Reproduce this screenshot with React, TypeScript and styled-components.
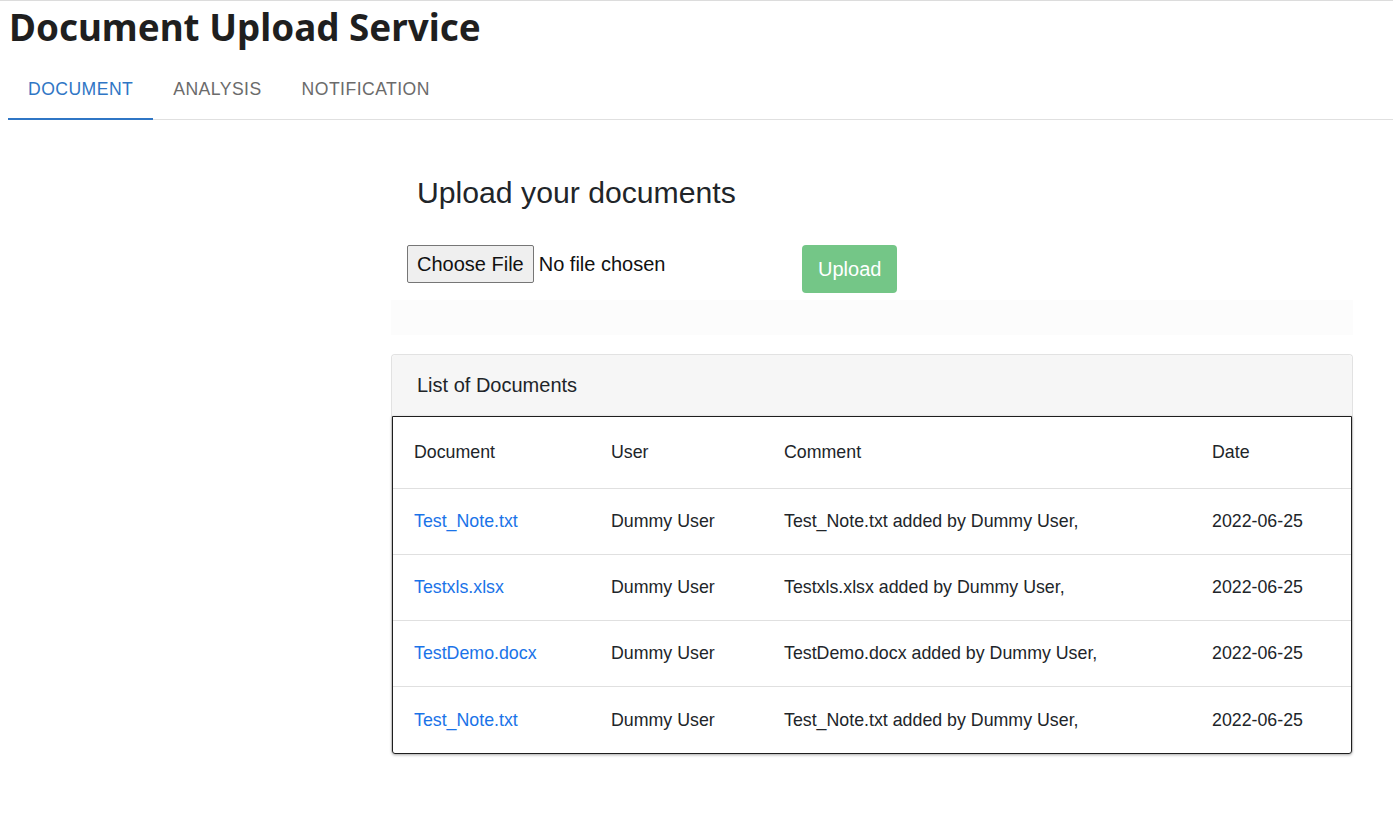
import React from "react";
import styled, { createGlobalStyle } from "styled-components";

const GlobalStyle = createGlobalStyle`
  html, body { margin: 0; padding: 0; background: #ffffff; }
  body {
    font-family: "Liberation Sans", Arial, sans-serif;
    color: #212529;
    border-top: 1px solid #dcdcdc;
  }
  * { box-sizing: border-box; }
`;

const Page = styled.div`
  width: 1393px;
  min-height: 813px;
`;

const Title = styled.h1`
  margin: 0;
  padding: 2px 0 0 9px;
  font-family: "Noto Sans", "Open Sans", sans-serif;
  font-weight: 700;
  font-size: 36.8px;
  line-height: 48px;
  color: #1f1f1f;
`;

const TabBar = styled.nav`
  margin: 9px 0 0 8px;
  display: flex;
  box-shadow: inset 0 -1px 0 #e0e0e0;
`;

const Tab = styled.div<{ $active?: boolean }>`
  height: 60px;
  padding: 0 20px;
  display: flex;
  align-items: center;
  font-size: 17.6px;
  letter-spacing: 0.45px;
  text-transform: uppercase;
  color: ${(p) => (p.$active ? "#2f76c5" : "#6b6b6b")};
  border-bottom: 2px solid ${(p) => (p.$active ? "#2f76c5" : "transparent")};
`;

const Content = styled.main`
  margin-left: 391px;
  width: 962px;
  padding-top: 56px;
`;

const SectionTitle = styled.h2`
  margin: 0;
  padding-left: 26px;
  font-weight: 400;
  font-size: 30.2px;
  line-height: 34px;
  color: #212529;
`;

const UploadRow = styled.div`
  display: flex;
  align-items: flex-start;
  margin-top: 35px;
  padding-left: 16px;
`;

const FileField = styled.div`
  width: 395px;
  display: flex;
  align-items: center;
  gap: 5px;
  font-size: 20px;
`;

const ChooseButton = styled.button`
  height: 38px;
  padding: 0 9px;
  font-family: "Liberation Sans", Arial, sans-serif;
  font-size: 20px;
  color: #111;
  background: #efefef;
  border: 1px solid #767676;
  border-radius: 2px;
`;

const FileStatus = styled.span`
  color: #111;
`;

const UploadButton = styled.button`
  height: 48px;
  padding: 0 16px;
  font-family: "Liberation Sans", Arial, sans-serif;
  font-size: 20px;
  color: #ffffff;
  background: #74c687;
  border: none;
  border-radius: 4px;
`;

const Band = styled.div`
  margin-top: 7px;
  height: 35px;
  background: #fcfcfc;
`;

const Card = styled.section`
  margin-top: 19px;
  border: 1px solid #e2e2e2;
  border-radius: 4px;
  border-bottom: none;
`;

const CardHeader = styled.div`
  height: 61px;
  padding-left: 25px;
  display: flex;
  align-items: center;
  background: #f6f6f6;
  font-size: 20px;
  color: #212529;
  border-radius: 4px 4px 0 0;
`;

const Table = styled.table`
  width: 960px;
  border-collapse: separate;
  border-spacing: 0;
  table-layout: fixed;
  border: 1px solid #1e1e1e;
  border-radius: 0 0 3px 3px;
  box-shadow: 0 1px 3px rgba(0, 0, 0, 0.35);
  font-size: 17.8px;
`;

const HeadCell = styled.th`
  height: 72px;
  padding: 0 0 0 21px;
  text-align: left;
  font-weight: 400;
  color: #212529;
  border-bottom: 1px solid #e0e0e0;
`;

const Cell = styled.td<{ $last?: boolean }>`
  height: 66px;
  padding: 0 0 0 21px;
  color: #212529;
  border-bottom: ${(p) => (p.$last ? "none" : "1px solid #e0e0e0")};
`;

const DocLink = styled.a`
  color: #1a73e8;
  text-decoration: none;
`;

const rows = [
  { doc: "Test_Note.txt", user: "Dummy User", date: "2022-06-25" },
  { doc: "Testxls.xlsx", user: "Dummy User", date: "2022-06-25" },
  { doc: "TestDemo.docx", user: "Dummy User", date: "2022-06-25" },
  { doc: "Test_Note.txt", user: "Dummy User", date: "2022-06-25" },
];

export default function App() {
  return (
    <Page>
      <GlobalStyle />
      <Title>Document Upload Service</Title>
      <TabBar>
        <Tab $active>Document</Tab>
        <Tab>Analysis</Tab>
        <Tab>Notification</Tab>
      </TabBar>
      <Content>
        <SectionTitle>Upload your documents</SectionTitle>
        <UploadRow>
          <FileField>
            <ChooseButton type="button">Choose File</ChooseButton>
            <FileStatus>No file chosen</FileStatus>
          </FileField>
          <UploadButton type="button" disabled>
            Upload
          </UploadButton>
        </UploadRow>
        <Band />
        <Card>
          <CardHeader>List of Documents</CardHeader>
          <Table>
            <colgroup>
              <col style={{ width: 197 }} />
              <col style={{ width: 173 }} />
              <col style={{ width: 428 }} />
              <col style={{ width: 160 }} />
            </colgroup>
            <thead>
              <tr>
                <HeadCell>Document</HeadCell>
                <HeadCell>User</HeadCell>
                <HeadCell>Comment</HeadCell>
                <HeadCell>Date</HeadCell>
              </tr>
            </thead>
            <tbody>
              {rows.map((r, i) => {
                const last = i === rows.length - 1;
                return (
                  <tr key={i}>
                    <Cell $last={last}>
                      <DocLink href="#">{r.doc}</DocLink>
                    </Cell>
                    <Cell $last={last}>{r.user}</Cell>
                    <Cell $last={last}>
                      {r.doc} added by {r.user},
                    </Cell>
                    <Cell $last={last}>{r.date}</Cell>
                  </tr>
                );
              })}
            </tbody>
          </Table>
        </Card>
      </Content>
    </Page>
  );
}
